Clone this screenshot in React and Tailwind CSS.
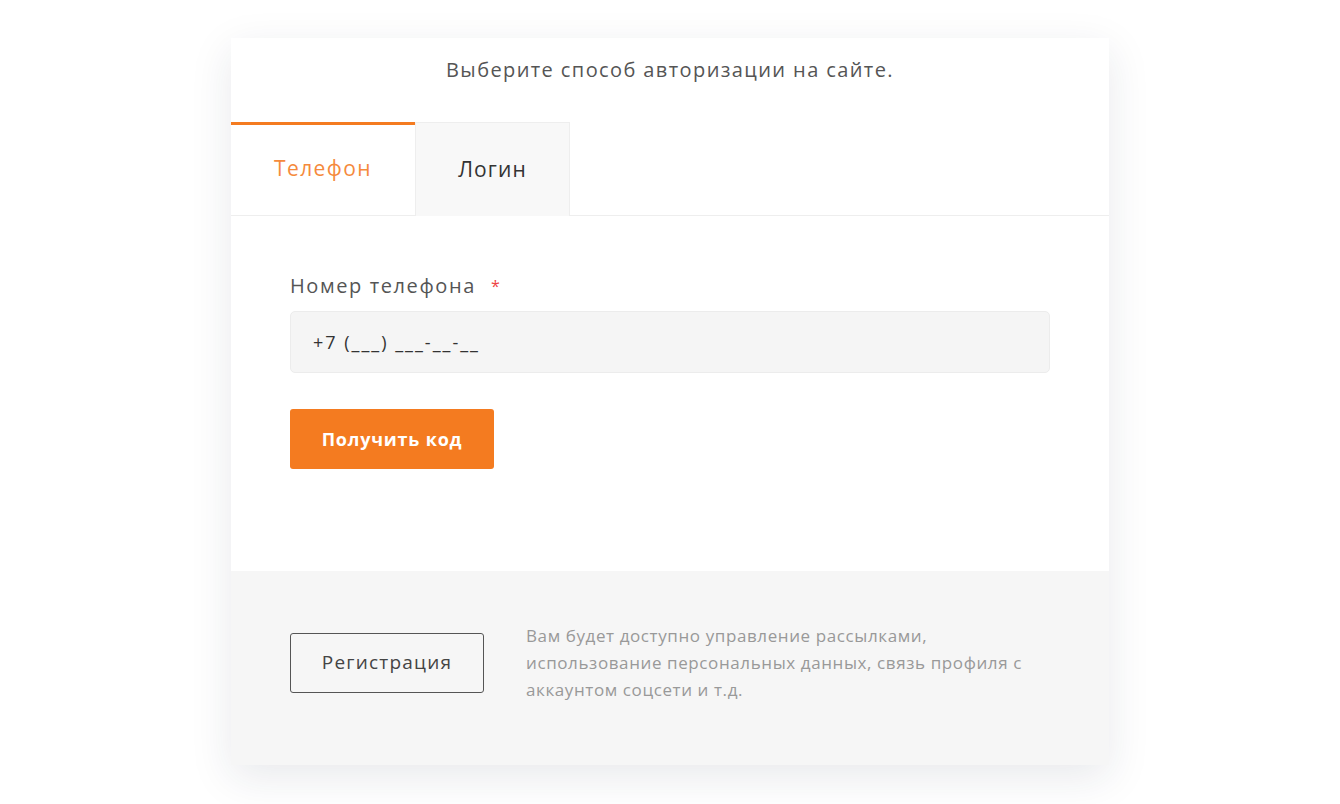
export default function App() {
  const font = { fontFamily: '"Open Sans", "Noto Sans", sans-serif' };
  return (
    <div className="min-h-[804px] w-full bg-white pt-[38px]" style={font}>
      <div className="mx-auto w-[878px] bg-white shadow-[0_12px_40px_rgba(30,40,70,0.10)]">
        <div className="flex h-[84px] items-start justify-center pt-[18px] text-[20px] leading-[28px] tracking-[1.4px] text-[#555]">
          Выберите способ авторизации на сайте.
        </div>
        <div className="flex h-[94px] border-b border-[#eeeeee]">
          <div className="flex w-[184px] items-center justify-center border-t-[3px] border-[#f47b20] pb-[2px] text-[21px] tracking-[1.4px] text-[#f58a3c]">
            Телефон
          </div>
          <div className="-mb-px flex w-[155px] items-center justify-center border border-b-0 border-[#eeeeee] bg-[#f8f8f8] text-[21px] tracking-[1.1px] text-[#333]">
            Логин
          </div>
        </div>
        <div className="px-[59px] pb-[102px] pt-[55px]">
          <div className="flex items-center text-[20px] tracking-[1.6px] text-[#555]">
            Номер телефона
            <span className="ml-[15px] text-[16px] text-[#ee4444]">*</span>
          </div>
          <div className="mt-[10px] flex h-[62px] w-[760px] items-center rounded-[5px] border border-[#ececec] bg-[#f5f5f5] px-[22px] text-[18px] tracking-[2px] text-[#333]">
            +7 (___) ___-__-__
          </div>
          <button className="mt-[36px] flex h-[60px] w-[204px] items-center justify-center rounded-[3px] bg-[#f47b20] text-[18px] font-bold tracking-[0.8px] text-white">
            Получить код
          </button>
        </div>
        <div className="flex items-center bg-[#f6f6f6] px-[59px] pb-[62px] pt-[51px]">
          <button className="flex h-[60px] w-[194px] shrink-0 items-center justify-center rounded-[3px] border border-[#555] text-[19px] tracking-[1.2px] text-[#444]">
            Регистрация
          </button>
          <div className="ml-[42px] w-[524px] text-[17px] leading-[27px] tracking-[0.6px] text-[#999]">
            Вам будет доступно управление рассылками,
            <br />
            использование персональных данных, связь профиля с
            <br />
            аккаунтом соцсети и т.д.
          </div>
        </div>
      </div>
    </div>
  );
}
